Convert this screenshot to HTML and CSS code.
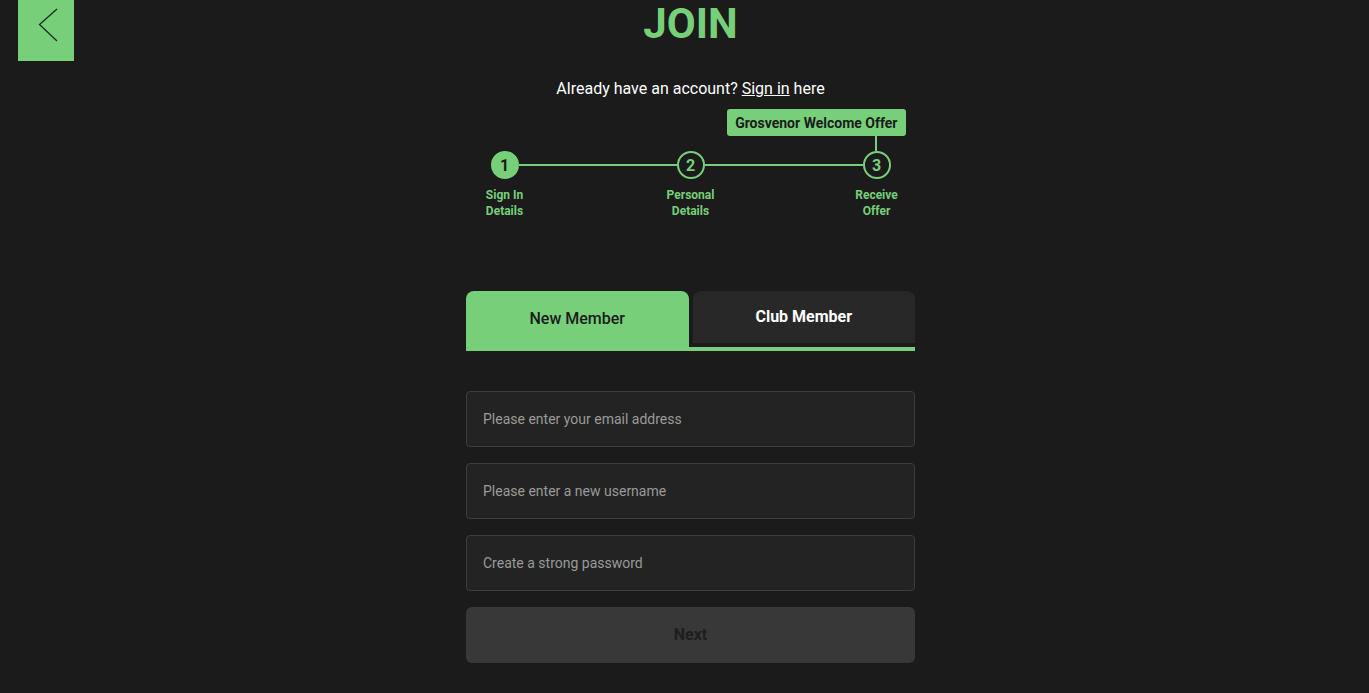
FILE: index.html
```html
<!DOCTYPE html>
<html lang="en">
<head>
<meta charset="utf-8">
<title>Join</title>
<link rel="stylesheet" href="styles.css">
</head>
<body>
<main class="page">
  <header class="top">
    <a class="back" href="#" aria-label="Back">
      <svg width="56" height="61" viewBox="0 0 56 61"><polyline points="39,9 21.5,24.5 39,41" fill="none" stroke="#1e2a1f" stroke-width="1.3"/></svg>
    </a>
    <h1 class="title">JOIN</h1>
    <span></span>
  </header>
  <p class="signin">Already have an account? <a href="#">Sign in</a> here</p>

  <section class="stepper">
    <div class="track">
      <span class="dot done">1</span>
      <span class="bar"></span>
      <span class="dot">2</span>
      <span class="bar"></span>
      <span class="dot offer">3<span class="tip">Grosvenor Welcome Offer</span></span>
    </div>
    <div class="labels">
      <span>Sign In<br>Details</span>
      <span>Personal<br>Details</span>
      <span>Receive<br>Offer</span>
    </div>
  </section>

  <section class="card">
    <div class="tabs">
      <button class="tab active">New Member</button>
      <button class="tab">Club Member</button>
    </div>
    <form class="form">
      <input class="field" type="email" placeholder="Please enter your email address">
      <input class="field" type="text" placeholder="Please enter a new username">
      <input class="field" type="password" placeholder="Create a strong password">
      <button class="next" type="button">Next</button>
    </form>
  </section>
</main>
</body>
</html>
```
FILE: styles.css
```css
* { box-sizing: border-box; }
html, body { margin: 0; background: #1b1b1b; }
body {
  font-family: Roboto, "Liberation Sans", Arial, sans-serif;
  color: #fff;
  height: 693px;
  overflow: hidden;
}
.page {
  padding-left: 12px;
  display: flex;
  flex-direction: column;
  align-items: center;
}
.top {
  width: 100%;
  display: grid;
  grid-template-columns: 1fr auto 1fr;
  align-items: start;
  height: 61px;
}
.back {
  display: block;
  width: 56px;
  height: 61px;
  margin-left: 6px;
  background: #77cf79;
}
.back svg { display: block; }
.title {
  margin: 0;
  font-size: 42px;
  line-height: 48px;
  font-weight: 700;
  color: #77cf79;
}
.signin {
  margin: 18px 0 0;
  font-size: 16px;
  line-height: 20px;
}
.signin a { color: #fff; text-decoration: underline; }

.stepper {
  margin-top: 52px;
  width: 432px;
  display: flex;
  flex-direction: column;
  align-items: center;
}
.track {
  width: 400px;
  display: flex;
  align-items: center;
}
.dot {
  position: relative;
  flex: none;
  width: 28px;
  height: 28px;
  border: 2px solid #77cf79;
  border-radius: 50%;
  display: flex;
  align-items: center;
  justify-content: center;
  font-size: 16px;
  font-weight: 700;
  color: #77cf79;
}
.dot.done { background: #77cf79; color: #1b1b1b; }
.bar { flex: 1; height: 2px; background: #77cf79; }
.tip {
  position: absolute;
  right: -17px;
  bottom: 41px;
  height: 27px;
  padding: 0 8px;
  display: flex;
  align-items: center;
  white-space: nowrap;
  background: #77cf79;
  color: #1b1b1b;
  border-radius: 3px;
  font-size: 14px;
  font-weight: 700;
}
.tip::after {
  content: "";
  position: absolute;
  top: 27px;
  right: 29px;
  width: 2px;
  height: 15px;
  background: #77cf79;
}
.labels {
  margin-top: 8px;
  width: 432px;
  display: flex;
  justify-content: space-between;
}
.labels span {
  width: 60px;
  text-align: center;
  font-size: 12px;
  line-height: 16px;
  font-weight: 700;
  color: #77cf79;
}

.card { margin-top: 72px; width: 449px; }
.tabs {
  display: flex;
  align-items: flex-start;
  gap: 4px;
  border-bottom: 4px solid #77cf79;
}
.tab {
  flex: 1;
  height: 52px;
  border: 0;
  border-radius: 8px 8px 0 0;
  background: #282828;
  color: #fff;
  font-family: inherit;
  font-size: 16px;
  font-weight: 700;
  padding: 0 0 2px;
}
.tab.active {
  height: 56px;
  background: #77cf79;
  color: #1c1c1c;
  font-weight: 500;
  padding: 0 0 2px;
}
.form {
  margin-top: 40px;
  display: flex;
  flex-direction: column;
  gap: 16px;
}
.field {
  height: 56px;
  width: 100%;
  background: #232323;
  border: 1px solid #3d3d3d;
  border-radius: 4px;
  padding: 0 16px;
  font-family: inherit;
  font-size: 14px;
  color: #fff;
  outline: none;
}
.field::placeholder { color: #9a9a9a; opacity: 1; }
.next {
  height: 56px;
  border: 0;
  border-radius: 6px;
  background: #383838;
  color: #1e1e1e;
  font-family: inherit;
  font-size: 16px;
  font-weight: 700;
  padding: 0 0 2px;
}
```
